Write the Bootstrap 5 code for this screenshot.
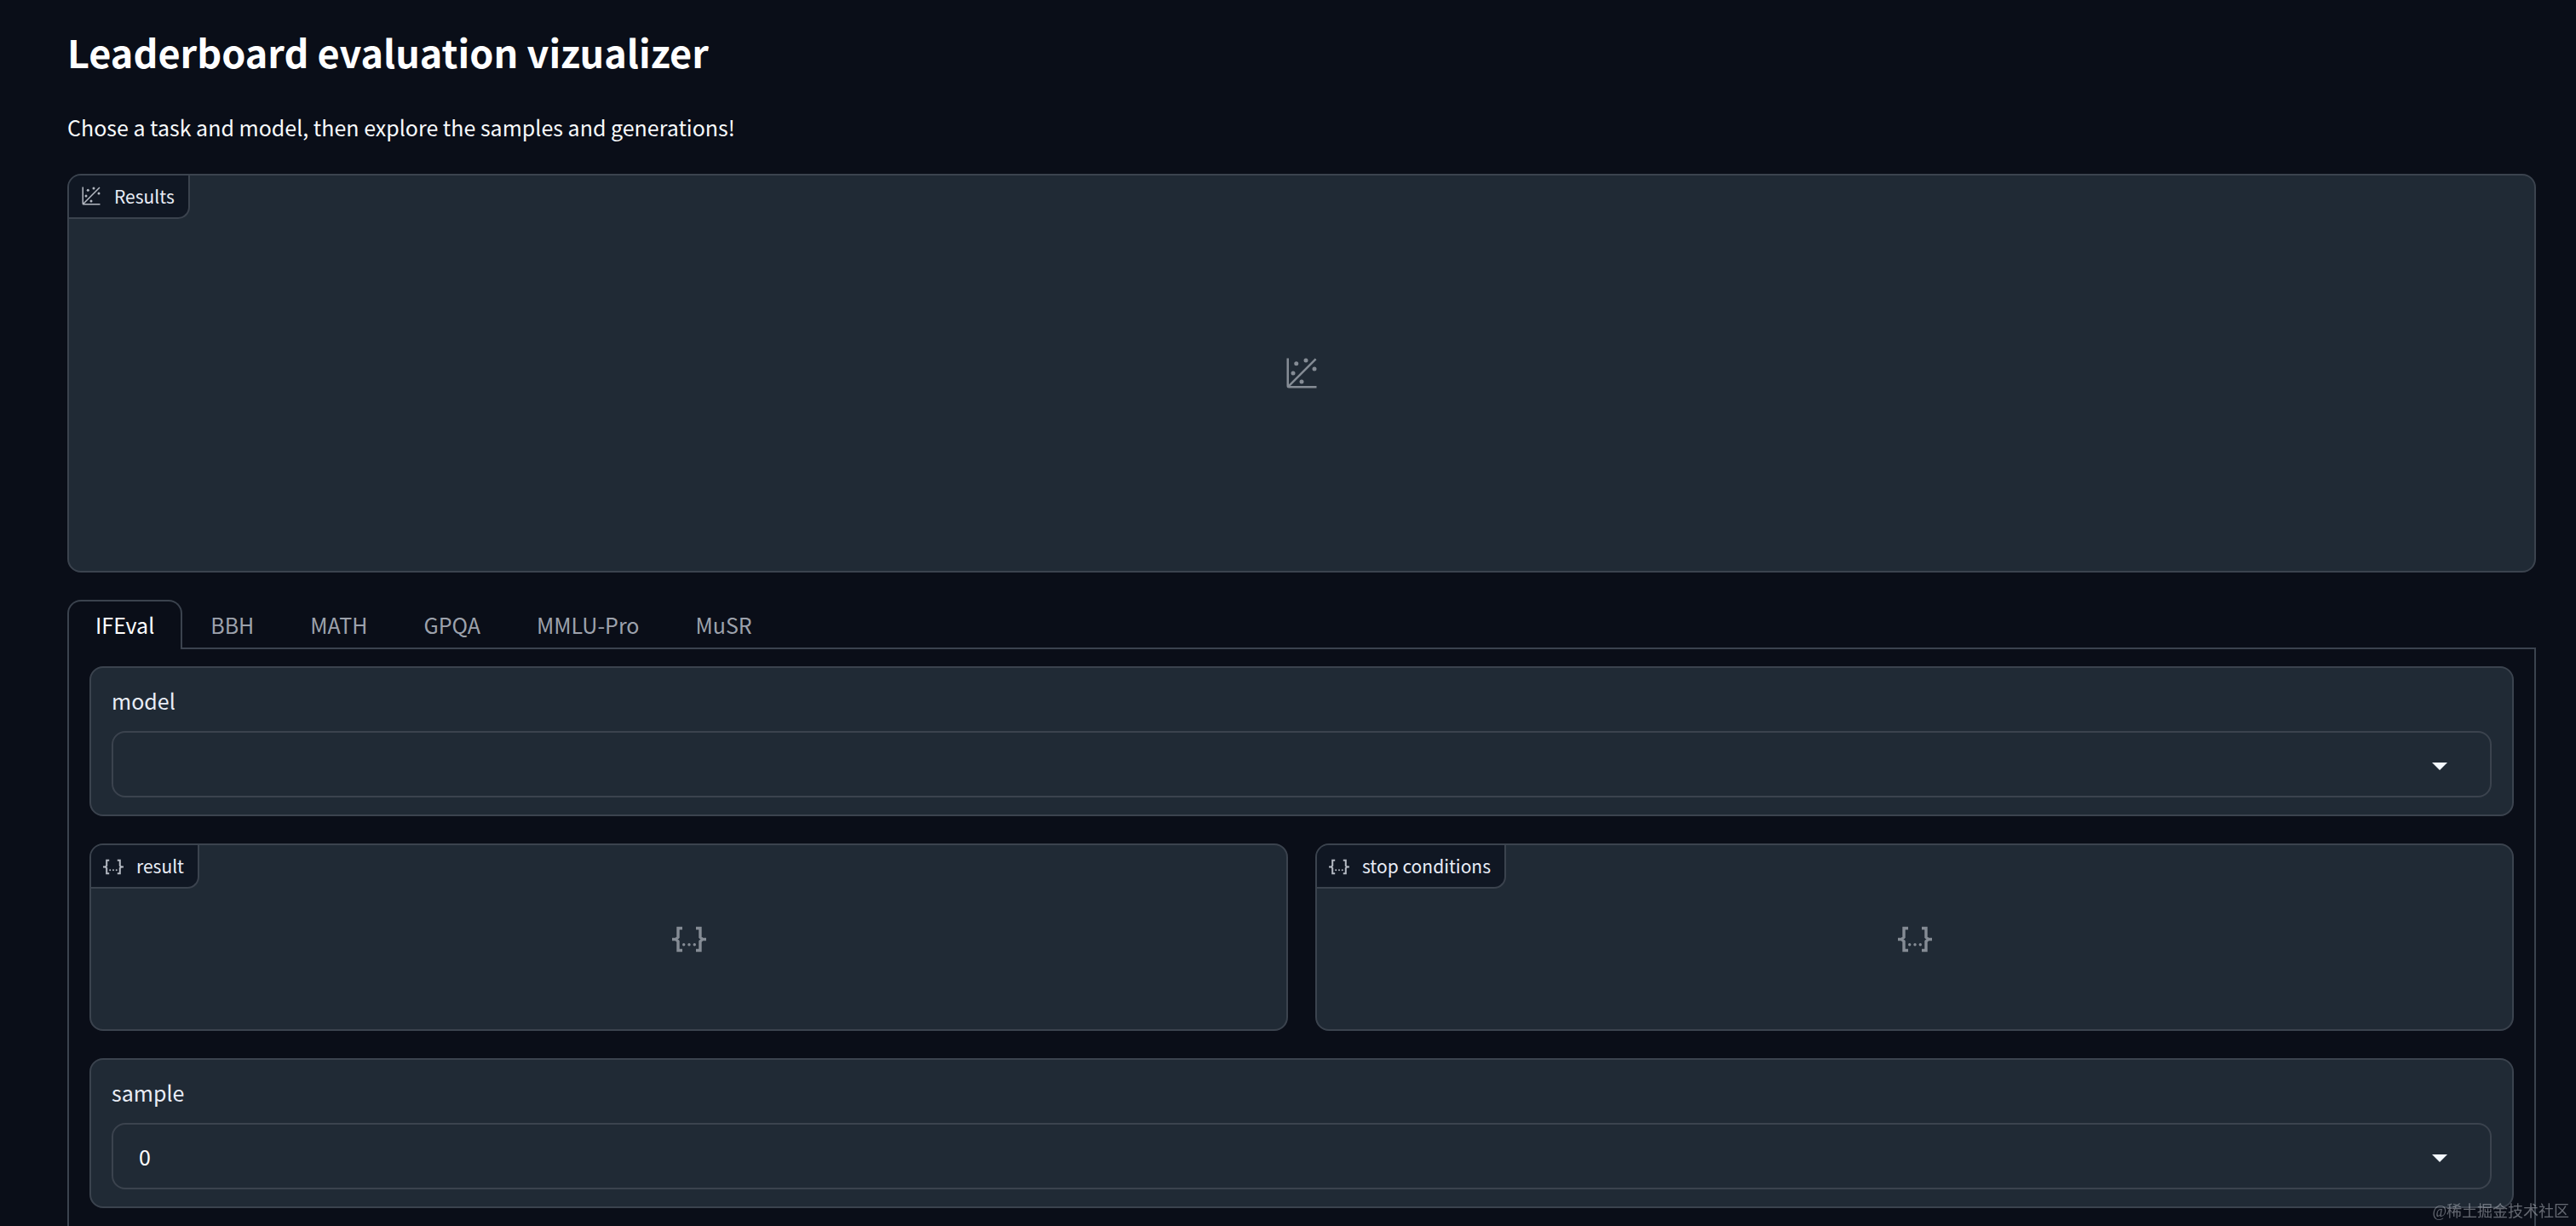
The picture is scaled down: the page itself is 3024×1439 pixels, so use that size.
<!DOCTYPE html>
<html lang="en" data-bs-theme="dark">
<head>
<meta charset="utf-8">
<meta name="viewport" content="width=device-width, initial-scale=1">
<title>Leaderboard evaluation vizualizer</title>
<link href="https://cdn.jsdelivr.net/npm/bootstrap@5.3.0/dist/css/bootstrap.min.css" rel="stylesheet">
<style>
  :root {
    --page: #0a0e18;
    --panel: #202a35;
    --tag: #101723;
    --line: #3b434e;
    --soft: #e9edf6;
    --muted: #9da2ac;
  }
  body {
    background: var(--page);
    color: #f8fafc;
    font-family: "Noto Sans CJK SC", "Noto Sans", sans-serif;
    font-size: 25px;
    line-height: 40px;
  }
  .page { padding: 31px 47px 0 79px; }
  .page-title { font-size: 45px; line-height: 60px; font-weight: 700; margin-bottom: 38px; }
  .intro { margin-bottom: 35px; }
  .panel {
    background: var(--panel);
    border: 2px solid var(--line);
    border-radius: 16px;
    overflow: hidden;
  }
  .plot-panel { height: 468px; margin-bottom: 32px; }
  .json-panel { height: 220px; }
  .field-panel { padding: 18px 24px 20px; }
  .panel-tag {
    top: 0; left: 0;
    gap: 15px;
    padding: 9px 16px 10px 14px;
    background: var(--tag);
    border: solid var(--line);
    border-width: 0 2px 2px 0;
    border-bottom-right-radius: 14px;
    color: var(--soft);
    font-size: 21px;
    line-height: 30px;
  }
  .tag-icon { width: 24px; height: 24px; color: #b4b9c2; }
  .empty-icon { width: 40px; height: 40px; color: #858c95; }
  .task-tabs { --bs-nav-tabs-border-width: 2px; border: 0; }
  .task-tabs .nav-link {
    border: 2px solid transparent;
    border-bottom: 0;
    border-radius: 16px 16px 0 0;
    margin: 0;
    padding: 7px 31px;
    color: var(--muted);
  }
  .task-tabs .nav-link.active {
    position: relative;
    background: var(--page);
    border-color: var(--line);
    color: #fff;
    margin-bottom: -2px;
    padding-bottom: 9px;
  }
  .task-body { border: 2px solid var(--line); border-bottom: 0; padding: 20px 24px; }
  .stack { gap: 32px; }
  .field-label { color: var(--soft); margin-bottom: 16px; }
  .field-select {
    height: 78px;
    padding: 0 64px 0 30px;
    border: 2px solid var(--line);
    border-radius: 16px;
    background-color: var(--panel);
    background-image: url("data:image/svg+xml,%3Csvg xmlns='http://www.w3.org/2000/svg' viewBox='0 0 18 9'%3E%3Cpath fill='%23f3f8ff' d='M0 0h18L9 9z'/%3E%3C/svg%3E");
    background-size: 18px 9px;
    background-position: right 50px top 35px;
    color: #fff;
    font-size: 25px;
    line-height: 40px;
  }
  .watermark {
    right: 8px; bottom: 4px;
    color: rgba(190, 194, 202, .5);
    font: 18px/26px "Liberation Serif", "Noto Sans CJK SC", serif;
  }
</style>
</head>
<body>
<svg class="d-none" aria-hidden="true">
  <symbol id="ico-plot" viewBox="0 0 32 32">
    <g fill="currentColor">
      <circle cx="20" cy="4" r="2"/><circle cx="8" cy="16" r="2"/><circle cx="28" cy="12" r="2"/>
      <circle cx="11" cy="7" r="2"/><circle cx="16" cy="24" r="2"/>
      <path d="M30 3.413 28.586 2 4 26.585V2H2v26a2 2 0 0 0 2 2h26v-2H5.413Z"/>
    </g>
  </symbol>
  <symbol id="ico-json" viewBox="0 0 40 40">
    <path fill="none" stroke="currentColor" stroke-width="3.4" d="M12 9.5H7V20L4.500 22.500H0h4.500L7 25v10.500h5M28 9.500h5V20l2.500 2.500H40h-4.500L33 25v10.500h-5"/>
    <g fill="currentColor"><circle cx="13.700" cy="28.700" r="1.700"/><circle cx="20" cy="28.700" r="1.700"/><circle cx="26.300" cy="28.700" r="1.700"/></g>
  </symbol>
</svg>

<main class="page min-vh-100 d-flex flex-column">
  <h1 class="page-title">Leaderboard evaluation vizualizer</h1>
  <p class="intro">Chose a task and model, then explore the samples and generations!</p>

  <section class="panel plot-panel position-relative d-flex align-items-center justify-content-center">
    <div class="panel-tag position-absolute d-flex align-items-center"><svg class="tag-icon"><use href="#ico-plot"/></svg>Results</div>
    <svg class="empty-icon"><use href="#ico-plot"/></svg>
  </section>

  <ul class="nav nav-tabs task-tabs" role="tablist">
    <li class="nav-item"><button class="nav-link active" type="button" role="tab" aria-selected="true">IFEval</button></li>
    <li class="nav-item"><button class="nav-link" type="button" role="tab">BBH</button></li>
    <li class="nav-item"><button class="nav-link" type="button" role="tab">MATH</button></li>
    <li class="nav-item"><button class="nav-link" type="button" role="tab">GPQA</button></li>
    <li class="nav-item"><button class="nav-link" type="button" role="tab">MMLU-Pro</button></li>
    <li class="nav-item"><button class="nav-link" type="button" role="tab">MuSR</button></li>
  </ul>

  <div class="task-body stack flex-grow-1 d-flex flex-column" role="tabpanel">
    <div class="panel field-panel">
      <label class="field-label d-block" for="model">model</label>
      <select class="form-select field-select" id="model"><option></option></select>
    </div>
    <div class="stack d-flex">
      <section class="panel json-panel position-relative d-flex align-items-center justify-content-center flex-fill w-50">
        <div class="panel-tag position-absolute d-flex align-items-center"><svg class="tag-icon"><use href="#ico-json"/></svg>result</div>
        <svg class="empty-icon"><use href="#ico-json"/></svg>
      </section>
      <section class="panel json-panel position-relative d-flex align-items-center justify-content-center flex-fill w-50">
        <div class="panel-tag position-absolute d-flex align-items-center"><svg class="tag-icon"><use href="#ico-json"/></svg>stop conditions</div>
        <svg class="empty-icon"><use href="#ico-json"/></svg>
      </section>
    </div>
    <div class="panel field-panel">
      <label class="field-label d-block" for="sample">sample</label>
      <select class="form-select field-select" id="sample"><option>0</option></select>
    </div>
  </div>
</main>
<div class="watermark position-fixed">@稀土掘金技术社区</div>
<script src="https://cdn.jsdelivr.net/npm/bootstrap@5.3.0/dist/js/bootstrap.bundle.min.js"></script>
</body>
</html>
